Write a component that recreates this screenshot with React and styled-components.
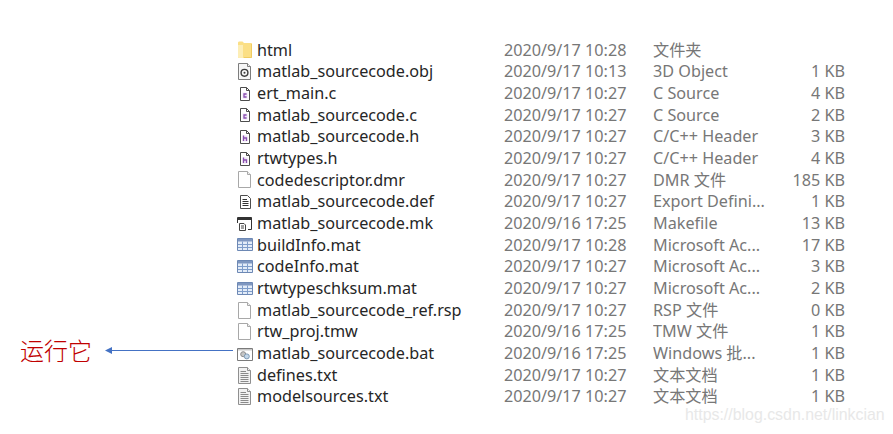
import React from "react";
import styled, { createGlobalStyle } from "styled-components";

const Global = createGlobalStyle`
  html, body { margin: 0; padding: 0; background: #fff; }
`;

const Page = styled.div`
  position: relative;
  width: 893px;
  height: 434px;
  overflow: hidden;
  background: #fff;
  font-family: "Noto Sans", "Noto Sans CJK SC", sans-serif;
  font-size: 16.2px;
`;

const List = styled.div`
  display: flex;
  flex-direction: column;
  padding: 39.6px 0 0 237px;
`;

const Row = styled.div`
  display: grid;
  grid-template-columns: 20px 247px 149px 132px 60px;
  align-items: center;
  height: 21.68px;
  line-height: 21.68px;
  white-space: nowrap;
`;

const IconCell = styled.div`
  display: flex;
  align-items: center;
  height: 100%;
`;

const Name = styled.div`
  color: #262626;
`;

const Meta = styled.div`
  color: #777;
  overflow: hidden;
`;

const Size = styled(Meta)`
  text-align: right;
`;

const Note = styled.div`
  position: absolute;
  left: 20px;
  top: 332px;
  color: #c00000;
  font-family: "Noto Sans CJK SC", sans-serif;
  font-size: 24px;
  font-weight: 300;
  line-height: 36px;
`;

const ArrowSvg = styled.svg`
  position: absolute;
  left: 100px;
  top: 344px;
`;

const Watermark = styled.div`
  position: absolute;
  left: 685px;
  top: 403px;
  color: #e8e8e8;
  font-family: "Liberation Sans", sans-serif;
  font-size: 15.9px;
  line-height: 24px;
`;

const Svg = ({ children }) => (
  <svg width="16" height="18" viewBox="0 0 16 18" fill="none">{children}</svg>
);

const Sheet = ({ children, fill = "#fff", stroke = "#9a9a9a" }) => (
  <>
    <path d="M1.5 0.5H10.5L13.5 3.5V16.5H1.5Z" fill={fill} stroke={stroke} />
    <path d="M10.5 0.5V3.5H13.5" fill="#f1f1f1" stroke={stroke} />
    {children}
  </>
);

const Folder = () => (
  <Svg>
    <path d="M1 2C1 1 1.5 0.5 2.5 0.5H5.5L7 2H14C14.6 2 15 2.4 15 3V16C15 16.6 14.6 17 14 17H2C1.4 17 1 16.6 1 16Z" fill="#fbdf85" />
    <path d="M1 4H6V17H2C1.4 17 1 16.6 1 16Z" fill="#fdeeb6" />
    <path d="M14.5 3V16.5H7" stroke="#f0cc62" />
  </Svg>
);

const Obj = () => (
  <Svg>
    <Sheet stroke="#7d7d7d" fill="#f6f6f6">
      <circle cx="7.5" cy="9.8" r="3.4" stroke="#3c3c3c" strokeWidth="1.4" />
      <circle cx="7.5" cy="9.8" r="1" fill="#3c3c3c" />
    </Sheet>
  </Svg>
);

const Source = ({ letter }) => (
  <Svg>
    <path d="M3.5 2.5H9.5L12.5 5.5V15.5H3.5Z" fill="#fff" stroke="#4d4d4d" />
    <path d="M9.5 2.5V5.5H12.5" stroke="#4d4d4d" />
    <path d="M5.5 7.5H10.5V13.5H5.5Z" fill="#efe6f5" />
    {letter === "c" ? (
      <path d="M9.6 9H7V12H9.6" stroke="#8a4fb0" strokeWidth="1.3" />
    ) : (
      <path d="M6.5 7.5V13M6.5 10H9.5V13" stroke="#8a4fb0" strokeWidth="1.3" />
    )}
  </Svg>
);

const Blank = () => (
  <Svg><Sheet stroke="#a8a8a8" /></Svg>
);

const Def = () => (
  <Svg>
    <path d="M3.5 2.5H10.5L13.5 5.5V15.5H3.5Z" fill="#fff" stroke="#4d4d4d" />
    <path d="M5.5 6.5H10M5.5 8.5H11.5M5.5 10.5H11.5M5.5 12.5H11.5" stroke="#333" />
  </Svg>
);

const Make = () => (
  <Svg>
    <path d="M0.5 8V2.5H14.5V14.5H11" stroke="#333" />
    <path d="M1 2.5H14.5V5H1Z" fill="#333" />
    <path d="M2.5 8.5H7L8.5 10V15.5H2.5Z" fill="#fff" stroke="#444" />
    <path d="M4 11H7M4 13H7" stroke="#444" />
  </Svg>
);

const Table = () => (
  <Svg>
    <path d="M0.5 2.5H15.5V14.5H0.5Z" fill="#e3ecf8" stroke="#6d88b4" />
    <path d="M1 3H15V5.5H1Z" fill="#7f97c0" />
    <path d="M1 8.5H15M1 11.5H15M5.5 5.5V14M10.5 5.5V14" stroke="#7f9dca" />
  </Svg>
);

const Bat = () => (
  <Svg>
    <path d="M0.5 3.5H15.5V15.5H0.5Z" fill="#fff" stroke="#7a7a7a" />
    <path d="M1 4H15V5.5H1Z" fill="#c9c9c9" />
    <circle cx="6.2" cy="9.2" r="2.5" fill="#c5c5c5" stroke="#8c8c8c" />
    <circle cx="9.8" cy="11.4" r="2.5" fill="#c3d6e8" stroke="#7f9bb5" />
  </Svg>
);

const Text = () => (
  <Svg>
    <Sheet fill="#f2f2f2" stroke="#8f8f8f">
      <path d="M3.5 4.5H9M3.5 6.5H11.5M3.5 8.5H11.5M3.5 10.5H11.5M3.5 12.5H11.5M3.5 14.5H11.5" stroke="#8a8a8a" />
    </Sheet>
  </Svg>
);

const SourceC = () => <Source letter="c" />;
const SourceH = () => <Source letter="h" />;

const files = [
  [Folder, "html", "2020/9/17 10:28", "文件夹", ""],
  [Obj, "matlab_sourcecode.obj", "2020/9/17 10:13", "3D Object", "1 KB"],
  [SourceC, "ert_main.c", "2020/9/17 10:27", "C Source", "4 KB"],
  [SourceC, "matlab_sourcecode.c", "2020/9/17 10:27", "C Source", "2 KB"],
  [SourceH, "matlab_sourcecode.h", "2020/9/17 10:27", "C/C++ Header", "3 KB"],
  [SourceH, "rtwtypes.h", "2020/9/17 10:27", "C/C++ Header", "4 KB"],
  [Blank, "codedescriptor.dmr", "2020/9/17 10:27", "DMR 文件", "185 KB"],
  [Def, "matlab_sourcecode.def", "2020/9/17 10:27", "Export Defini...", "1 KB"],
  [Make, "matlab_sourcecode.mk", "2020/9/16 17:25", "Makefile", "13 KB"],
  [Table, "buildInfo.mat", "2020/9/17 10:28", "Microsoft Ac...", "17 KB"],
  [Table, "codeInfo.mat", "2020/9/17 10:27", "Microsoft Ac...", "3 KB"],
  [Table, "rtwtypeschksum.mat", "2020/9/17 10:27", "Microsoft Ac...", "2 KB"],
  [Blank, "matlab_sourcecode_ref.rsp", "2020/9/17 10:27", "RSP 文件", "0 KB"],
  [Blank, "rtw_proj.tmw", "2020/9/16 17:25", "TMW 文件", "1 KB"],
  [Bat, "matlab_sourcecode.bat", "2020/9/16 17:25", "Windows 批...", "1 KB"],
  [Text, "defines.txt", "2020/9/17 10:27", "文本文档", "1 KB"],
  [Text, "modelsources.txt", "2020/9/17 10:27", "文本文档", "1 KB"],
];

export default function App() {
  return (
    <Page>
      <Global />
      <List>
        {files.map(([Icon, name, date, type, size]) => (
          <Row key={name}>
            <IconCell><Icon /></IconCell>
            <Name>{name}</Name>
            <Meta>{date}</Meta>
            <Meta>{type}</Meta>
            <Size>{size}</Size>
          </Row>
        ))}
      </List>
      <Note>运行它</Note>
      <ArrowSvg width="135" height="14" viewBox="0 0 135 14">
        <path d="M133 6.5H10" stroke="#4472c4" strokeWidth="1" />
        <path d="M5 6.5L12 3V10Z" fill="#4472c4" />
      </ArrowSvg>
      <Watermark>https://blog.csdn.net/linkcian</Watermark>
    </Page>
  );
}
